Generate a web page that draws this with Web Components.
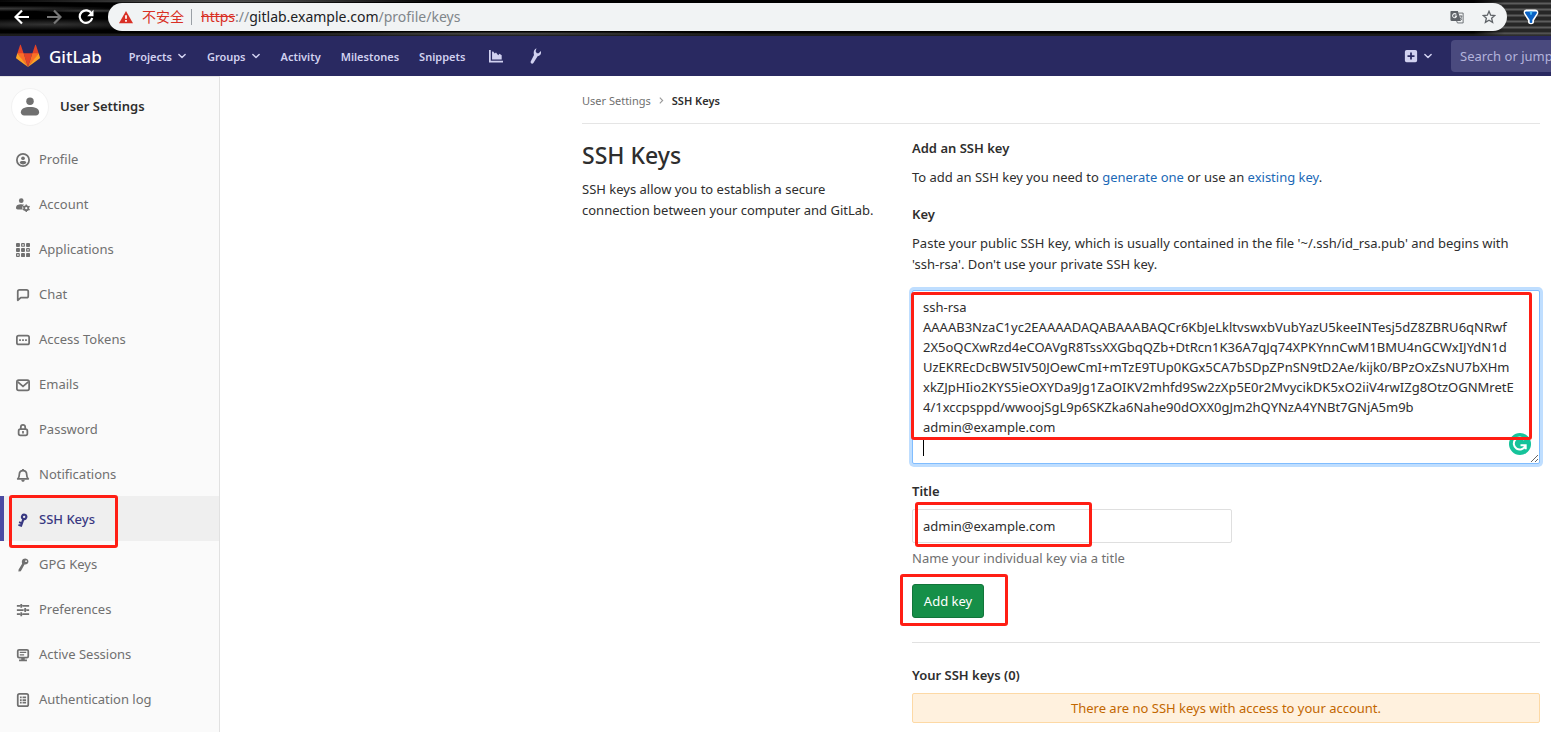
<!DOCTYPE html>
<html lang="en">
<head>
<meta charset="utf-8">
<title>SSH Keys · User Settings · GitLab</title>
<style>
  html, body { margin: 0; min-height: 100%; background: #fff; }
  body { font: 13px/21px "Noto Sans", "Open Sans", "Noto Sans CJK SC", sans-serif; color: #2e2e2e; overflow: hidden; }
</style>
</head>
<body>
<gitlab-page></gitlab-page>

<script>
const define = (name, html) => {
  const template = document.createElement('template');
  template.innerHTML = html;
  customElements.define(name, class extends HTMLElement {
    constructor() {
      super();
      this.attachShadow({ mode: 'open' }).append(template.content.cloneNode(true));
    }
  });
};

/* 16-unit glyphs, painted in the current text colour */
const glyphs = {
  profile: '<circle cx="8" cy="8" r="7" fill="none" stroke="currentColor" stroke-width="2"/><circle cx="8" cy="6" r="2.1"/><path d="M4.2 11.2C4.2 9.4 6 9 8 9s3.800.4 3.800 2.200c-1 1.300-2.300 1.800-3.800 1.800s-2.800-.5-3.800-1.800z"/>',
  account: '<circle cx="6" cy="3" r="2.700"/><path d="M0 11.500C0 8 2.500 7 6 7c1.500 0 2.600.2 3.500.6-2 .8-2.600 2.600-2 5.400H2C.7 13 0 12.500 0 11.500z"/><circle cx="11.700" cy="11.600" r="2.300" fill="none" stroke="currentColor" stroke-width="2"/><path d="M11.700 7.300v8.600M7.800 9.500l7.800 4.200M7.800 13.700l7.800-4.200" stroke="currentColor" stroke-width="1.600"/><circle cx="11.700" cy="11.600" r="1.300" fill="#fafafa"/>',
  applications: '<rect width="4.500" height="4.500" rx="1"/><rect x="6.500" y=".7" width="3" height="3" rx=".4" fill="none" stroke="currentColor" stroke-width="1.400"/><rect x="11.500" width="4.500" height="4.500" rx="1"/><rect y="5.700" width="4.500" height="4.500" rx="1"/><rect x="5.750" y="5.700" width="4.500" height="4.500" rx="1"/><rect x="12.200" y="6.400" width="3" height="3" rx=".4" fill="none" stroke="currentColor" stroke-width="1.400"/><rect x=".7" y="12.200" width="3" height="3" rx=".4" fill="none" stroke="currentColor" stroke-width="1.400"/><rect x="5.750" y="11.500" width="4.500" height="4.500" rx="1"/><rect x="11.500" y="11.500" width="4.500" height="4.500" rx="1"/>',
  chat: '<path d="M2 14V4a2 2 0 0 1 2-2h8a2 2 0 0 1 2 2v5a2 2 0 0 1-2 2H5.500z" fill="none" stroke="currentColor" stroke-width="2" stroke-linejoin="round"/>',
  token: '<rect x="1" y="3" width="14" height="10" rx="2" fill="none" stroke="currentColor" stroke-width="2"/><path d="M3.600 7h2v2h-2zM7 7h2v2H7zM10.400 7h2v2h-2z"/>',
  mail: '<rect x="1" y="2.500" width="14" height="11.500" rx="2" fill="none" stroke="currentColor" stroke-width="2"/><path d="M2 4.500l6 5 6-5" fill="none" stroke="currentColor" stroke-width="2"/>',
  lock: '<rect x="3" y="7" width="10" height="7" rx="2" fill="none" stroke="currentColor" stroke-width="2"/><path d="M5.500 7V4.500a2.500 2.500 0 0 1 5 0V7" fill="none" stroke="currentColor" stroke-width="2"/><path d="M7 9h2v3H7z"/>',
  bell: '<path d="M2 12.500c1.500-1.500 1.800-3 1.800-5C3.800 4.500 5.500 3 8 3s4.200 1.500 4.200 4.500c0 2 .3 3.500 1.800 5z" fill="none" stroke="currentColor" stroke-width="2" stroke-linejoin="round"/><path d="M7 1h2v2H7zM6 13.500h4c0 1.500-.8 2.300-2 2.300s-2-.8-2-2.300z"/>',
  key: '<g transform="rotate(20 8 8)"><circle cx="8" cy="4.200" r="2.500" fill="none" stroke="currentColor" stroke-width="2.400"/><path d="M6.800 7h2.600v9H5v-2h1.800v-1H4.600v-2.200h2.200z"/></g>',
  gpg: '<path d="M8.200 1.200c2.300-1.500 5.800-.2 6 2.500.2 2.400-2 4.200-4.500 3.800L5.500 15l-2.800.5.3-2.500 4-6.300C6.300 4.400 6.800 2.200 8.200 1.200z"/><circle cx="11.500" cy="3.700" r="1" fill="#fafafa"/>',
  sliders: '<path d="M1 3.200h3.500M7.500 3.200H15M1 8h7.500M12 8h3M1 12.800h3.500M7.500 12.800H15" stroke="currentColor" stroke-width="2"/><path d="M5 1h2v4.400H5zM9.500 5.800h2v4.400h-2zM5 10.600h2V15H5z"/><path d="M4 3.200h4M8.500 8h4M4 12.800h4" stroke="currentColor" stroke-width="1.200"/>',
  monitor: '<rect x="2" y="2" width="12" height="9" rx="1.500" fill="none" stroke="currentColor" stroke-width="2"/><path d="M4.300 4.300h7.400v1.500H4.300zM4.300 7.200h5v1.400h-5zM6 11h4v2h2.500v2h-9v-2H6z"/>',
  log: '<rect x="2" y="1" width="12" height="14" rx="2" fill="none" stroke="currentColor" stroke-width="2"/><path d="M4.500 4h2v2h-2zM7.500 4h4v2h-4zM4.500 7h2v2h-2zM7.500 7h4v2h-4zM4.500 10h2v2h-2zM7.500 10h4v2h-4z"/>',
  user: '<circle cx="8" cy="3.400" r="3"/><path d="M.7 12.200C.7 9.300 3.600 8 8 8s7.300 1.300 7.300 4.200c0 1.600-1 2.500-2.600 2.500H3.300C1.700 14.700.7 13.800.7 12.200z"/>',
  down: '<path d="M3 5.500l5 5 5-5" fill="none" stroke="currentColor" stroke-width="2.400" stroke-linecap="round" stroke-linejoin="round"/>',
  right: '<path d="M5 3l5 5-5 5" fill="none" stroke="currentColor" stroke-width="2"/>',
  chart: '<path d="M1 1v13.500h15" fill="none" stroke="currentColor" stroke-width="2"/><path d="M3.500 12V3.500l1-1L6.500 5 8 4l2.500 3L12 5.500 14.500 7v5z"/>',
  wrench: '<path d="M9.500.2L8.600 3.200l1.200 2 1.900.1L13.800 3c.8 2.700-.5 5-3.200 5.300L6.400 15c-1.100 1.500-3.300.3-2.700-1.500L7 7C6.200 3.800 7 1.200 9.500.2z"/>',
  plus: '<path d="M3 1h10a2 2 0 0 1 2 2v10a2 2 0 0 1-2 2H3a2 2 0 0 1-2-2V3a2 2 0 0 1 2-2zm4 3v3H4v2h3v3h2V9h3V7H9V4z" fill-rule="evenodd"/>',
  back: '<path d="M15 8H2M8 1.500L1.500 8 8 14.500" fill="none" stroke="currentColor" stroke-width="2.200"/>',
  forward: '<path d="M1 8h13M8 1.500L14.500 8 8 14.500" fill="none" stroke="currentColor" stroke-width="2.200"/>',
  reload: '<path d="M13.600 4.600A6.300 6.300 0 1 0 14.200 9" fill="none" stroke="currentColor" stroke-width="2.200"/><path d="M15.500.8v6.400H9.200z"/>',
  warning: '<path d="M8 1l8 14H0z"/><path d="M7 6h2v4H7zM7 11.500h2v2H7z" fill="#fff"/>',
  star: '<path d="M8 1.500l1.900 4.400 4.700.4L11 9.400l1.100 4.700L8 11.600l-4.100 2.500L5 9.400 1.400 6.300l4.700-.4z" fill="none" stroke="currentColor" stroke-width="1.500"/>',
  translate: '<path d="M1 1h8l3.500 11.500H2A1.500 1.500 0 0 1 .5 11V2z"/><path d="M9.500 3.500H15v11.300H8.500l-1-2.500" fill="none" stroke="currentColor"/><path d="M7.200 5.200A2.300 2.300 0 1 0 7.500 7H5.400" fill="none" stroke="#f1f3f4" stroke-width="1.200"/><path d="M10.500 7H14M12.500 6v1M13.500 7c-.4 2-1 3-2.300 4M11.500 8.500l2.200 3" fill="none" stroke="currentColor" stroke-width=".9"/>',
  pin: '<path d="M4 .5h8C15 .5 16 3 15 5l-4 6.500V13c0 3-6 3-6 0v-1.500L1 5C0 3 1 .5 4 .5z" fill="#fff"/><path d="M3 2.500h10c1 0 1.200 1 .8 1.800L9.300 11v2c0 1.300-2.600 1.300-2.600 0v-2L2.200 4.300C1.800 3.500 2 2.500 3 2.500z" fill="#0b62c4"/><path d="M6.500 2.500h3L8.500 6h-1z" fill="#45baf5"/>'
};
customElements.define('gl-icon', class extends HTMLElement {
  connectedCallback() {
    if (this.shadowRoot) return;
    this.attachShadow({ mode: 'open' }).innerHTML =
      `<style>:host{display:block;flex:none;width:14px;height:14px}svg{display:block;width:100%;height:100%}</style>
       <svg viewBox="0 0 16 16" fill="currentColor" aria-hidden="true">${glyphs[this.getAttribute('name')]}</svg>`;
  }
});

/* Red highlight drawn over whatever it is placed on */
define('mark-frame', `<style>:host{display:block;position:absolute;box-sizing:border-box;border:3px solid #ff1e14;border-radius:3px;pointer-events:none}</style>`);

define('browser-bar', `
<style>
  :host { display: flex; align-items: center; height: 36px; box-sizing: border-box; padding: 0 12px 2px 14px;
    background:
      linear-gradient(transparent 33px, #3338 34px),
      radial-gradient(ellipse 260px 2px at 32% 94%, #5a5a5a, transparent),
      radial-gradient(ellipse 240px 2px at 14% 3%, #666, transparent),
      radial-gradient(ellipse 120px 3px at 0 24%, #3c3c3c, transparent),
      radial-gradient(ellipse 60px 2px at 6% 30%, #444, transparent),
      radial-gradient(ellipse 140px 6px at 3% 68%, #333, transparent),
      linear-gradient(90deg, #000 95%, transparent 97%),
      repeating-linear-gradient(#262626 0 2px, #5c5c5c 3px 4px, #262626 5px 6px); }
  button { background: none; border: 0; padding: 0; color: #fff; display: block; }
  .nav { display: flex; gap: 16px; }
  .nav gl-icon { width: 16px; height: 16px; }
  .off { color: #777; }
  .box { flex: 1; display: flex; align-items: center; height: 28px; box-sizing: border-box; margin: 0 16px 0 14px; padding: 0 11px;
    border-radius: 14px; background: #f1f3f4; color: #80868b; font-size: 14px; line-height: 20px; white-space: nowrap; }
  .warn { display: flex; align-items: center; gap: 9px; color: #d93025; }
  .sep { width: 1px; height: 16px; background: #9aa0a6; margin: 0 9px 0 7px; }
  .url { flex: 1; } .url s { color: #d93025; } .url b { font-weight: 400; color: #202124; }
  .tools { display: flex; gap: 18px; color: #5f6368; }
  .ext gl-icon { width: 16px; height: 16px; }
</style>
<div class="nav">
  <button aria-label="Back"><gl-icon name="back"></gl-icon></button>
  <button class="off" aria-label="Forward"><gl-icon name="forward"></gl-icon></button>
  <button aria-label="Reload"><gl-icon name="reload"></gl-icon></button>
</div>
<div class="box">
  <span class="warn"><gl-icon name="warning"></gl-icon><span>不安全</span></span>
  <span class="sep"></span>
  <span class="url"><s>https</s>://<b>gitlab.example.com</b>/profile/keys</span>
  <span class="tools"><gl-icon name="translate"></gl-icon><gl-icon name="star"></gl-icon></span>
</div>
<button class="ext" aria-label="Extension"><gl-icon name="pin"></gl-icon></button>`);

define('nav-link', `
<style>:host{display:block}a{display:flex;align-items:center;gap:5px;color:inherit;text-decoration:none}</style>
<a href="#"><slot></slot></a>`);

define('gl-navbar', `
<style>
  :host { display: flex; align-items: center; height: 40px; padding-left: 16px; background: #292961; color: #d1d1f0; font-size: 11px; font-weight: 600; white-space: nowrap; overflow: hidden; }
  .brand { display: flex; align-items: center; gap: 9px; margin-right: 27px; color: #fff; font-size: 17px; font-weight: 500; text-decoration: none; }
  .brand svg { width: 24px; height: 24px; display: block; }
  nav { display: flex; align-items: center; gap: 20px; flex: 1; }
  .small { width: 10px; height: 10px; }
  .chart { margin-left: 4px; }
  .wrench { margin-left: 4px; width: 16px; height: 16px; }
  nav-link.new { margin-right: 18px; }
  input { box-sizing: border-box; width: 100px; height: 32px; border: 0; border-radius: 4px 0 0 4px; padding: 0 0 0 9px; background: #4a4a7e; font: 400 13px/20px "Noto Sans", "Open Sans", sans-serif; }
  input::placeholder { color: #b3b3db; opacity: 1; }
</style>
<a class="brand" href="#"><svg viewBox="0 0 36 36" aria-hidden="true">
  <path fill="#e24329" d="M2 14l9.380 9v-9l-4-12.280c-.205-.632-1.176-.632-1.380 0z"/>
  <path fill="#e24329" d="M34 14l-9.380 9v-9l4-12.280c.205-.632 1.176-.632 1.380 0z"/>
  <path fill="#e24329" d="M18 34.380L11.380 14h13.240z"/>
  <path fill="#fc6d26" d="M18 34.380L11.380 14H2l6 9z"/><path fill="#fc6d26" d="M18 34.380L24.620 14H34l-6 9z"/>
  <path fill="#fca326" d="M2 14L.1 20.160c-.180.565 0 1.200.5 1.560L18 34.380z"/><path fill="#fca326" d="M34 14l1.900 6.160c.180.565 0 1.200-.5 1.560L18 34.380z"/>
</svg><span>GitLab</span></a>
<nav>
  <nav-link>Projects<gl-icon class="small" name="down"></gl-icon></nav-link>
  <nav-link>Groups<gl-icon class="small" name="down"></gl-icon></nav-link>
  <nav-link>Activity</nav-link>
  <nav-link>Milestones</nav-link>
  <nav-link>Snippets</nav-link>
  <nav-link aria-label="Analytics"><gl-icon class="chart" name="chart"></gl-icon></nav-link>
  <nav-link aria-label="Admin"><gl-icon class="wrench" name="wrench"></gl-icon></nav-link>
</nav>
<nav-link class="new" aria-label="New"><gl-icon name="plus"></gl-icon><gl-icon class="small" name="down"></gl-icon></nav-link>
<input type="text" aria-label="Search" placeholder="Search or jump to…">`);

customElements.define('side-item', class extends HTMLElement {
  connectedCallback() {
    if (this.shadowRoot) return;
    this.attachShadow({ mode: 'open' }).innerHTML = `
<style>
  :host { display: block; position: relative; color: #707070; }
  a { display: flex; align-items: center; gap: 9px; height: 45px; box-sizing: border-box; padding: 2px 0 0 16px; color: inherit; text-decoration: none; }
  :host([active]) { color: #393982; background: #efefef; box-shadow: inset 4px 0 #4b4ba3; font-weight: 500; }
</style>
<a href="#"><gl-icon name="${this.getAttribute('icon')}"></gl-icon><span><slot></slot></span></a><slot name="mark"></slot>`;
  }
});

define('gl-sidebar', `
<style>
  :host { display: block; background: #fafafa; border-right: 1px solid #e1e1e1; }
  header { display: flex; align-items: center; gap: 11px; height: 59px; padding-left: 11px; font-weight: 600; }
  .avatar { display: grid; place-items: center; width: 38px; height: 38px; box-sizing: border-box; border: 1px solid #f2f2f2; border-radius: 50%; background: #fff; color: #707070; }
  .avatar gl-icon { width: 20px; height: 20px; }
  mark-frame { left: 9px; top: -1px; width: 109px; height: 53px; z-index: 1; }
</style>
<header><span class="avatar"><gl-icon name="user"></gl-icon></span><span>User Settings</span></header>
<nav>
  <side-item icon="profile">Profile</side-item>
  <side-item icon="account">Account</side-item>
  <side-item icon="applications">Applications</side-item>
  <side-item icon="chat">Chat</side-item>
  <side-item icon="token">Access Tokens</side-item>
  <side-item icon="mail">Emails</side-item>
  <side-item icon="lock">Password</side-item>
  <side-item icon="bell">Notifications</side-item>
  <side-item icon="key" active>SSH Keys<mark-frame slot="mark"></mark-frame></side-item>
  <side-item icon="gpg">GPG Keys</side-item>
  <side-item icon="sliders">Preferences</side-item>
  <side-item icon="monitor">Active Sessions</side-item>
  <side-item icon="log">Authentication log</side-item>
</nav>`);

define('bread-crumbs', `
<style>
  :host { display: flex; align-items: center; gap: 6px; height: 48px; box-sizing: border-box; padding-top: 2px; border-bottom: 1px solid #e5e5e5; font-size: 11px; }
  a { color: #707070; text-decoration: none; } a[aria-current] { color: #2e2e2e; font-weight: 600; }
  gl-icon { width: 9px; height: 9px; color: #999; }
</style>
<a href="#">User Settings</a><gl-icon name="right"></gl-icon><a href="#" aria-current="page">SSH Keys</a>`);

define('key-form', `
<style>
  :host { display: block; }
  h5, p, form { margin: 0; }
  h5, label { display: block; font-size: 13px; line-height: 20px; font-weight: 600; }
  a { color: #1b69b6; text-decoration: none; }
  .intro { margin: 9px 0 16px; }
  .hint { margin: 9px 0 15px; }
  .hint span { white-space: nowrap; }
  .field { position: relative; }
  textarea, input { display: block; box-sizing: border-box; width: 100%; padding: 6px 10px; border: 1px solid #dfdfdf; border-radius: 2px; background: #fff; color: #2e2e2e; font: 13px/20px "Noto Sans", "Open Sans", sans-serif; }
  textarea { height: 174px; overflow: hidden; resize: vertical; white-space: pre; border-color: #80bdff; outline: none; box-shadow: 0 0 0 3px #bfdeff; }
  .caret { position: absolute; left: 11px; bottom: 8px; width: 1px; height: 16px; background: #000; }
  .checker { position: absolute; right: 9px; bottom: 9px; width: 22px; height: 22px; }
  .key mark-frame { left: -1px; right: 8px; top: 2px; bottom: 24px; }
  .title { max-width: 320px; margin: 8px 0 5px; }
  .title-label { margin-top: 17px; }
  .title mark-frame { left: 3px; top: -7px; width: 177px; height: 45px; }
  .help { color: #707070; }
  .submit { width: fit-content; margin-top: 15px; }
  .submit mark-frame { left: -12px; top: -10px; width: 108px; height: 52px; }
  button { display: block; box-sizing: border-box; min-width: 72px; height: 34px; padding: 6px 10px; border: 1px solid #12753a; border-radius: 3px; background: #168f48; color: #fff; font: 13px/20px "Noto Sans", "Open Sans", sans-serif; }
  hr { margin: 24px 0 22px; border: 0; border-top: 1px solid #e1e1e1; }
  .empty { margin-top: 8px; height: 30px; box-sizing: border-box; border: 1px solid #fdd9a5; border-radius: 2px; background: #fff1de; color: #c26700; line-height: 28px; text-align: center; }
</style>
<h5>Add an SSH key</h5>
<p class="intro">To add an SSH key you need to <a href="#">generate one</a> or use an <a href="#">existing key</a>.</p>
<form>
  <label for="key">Key</label>
  <p class="hint">Paste your public SSH key, which is usually contained in the file '~/.ssh/id_rsa.pub' and begins with <span>'ssh-rsa'.</span> Don't use your private SSH key.</p>
  <div class="field key">
    <textarea id="key" spellcheck="false">ssh-rsa
AAAAB3NzaC1yc2EAAAADAQABAAABAQCr6KbJeLkltvswxbVubYazU5keeINTesj5dZ8ZBRU6qNRwf
2X5oQCXwRzd4eCOAVgR8TssXXGbqQZb+DtRcn1K36A7qJq74XPKYnnCwM1BMU4nGCWxIJYdN1d
UzEKREcDcBW5IV50JOewCmI+mTzE9TUp0KGx5CA7bSDpZPnSN9tD2Ae/kijk0/BPzOxZsNU7bXHm
xkZJpHIio2KYS5ieOXYDa9Jg1ZaOIKV2mhfd9Sw2zXp5E0r2MvycikDK5xO2iiV4rwIZg8OtzOGNMretE
4/1xccpsppd/wwoojSgL9p6SKZka6Nahe90dOXX0gJm2hQYNzA4YNBt7GNjA5m9b
admin@example.com
</textarea>
    <span class="caret"></span>
    <svg class="checker" viewBox="0 0 22 22" aria-hidden="true"><circle cx="11" cy="11" r="11" fill="#15c39a"/><path d="M15.500 6.800A6 6 0 1 0 16.300 13M11.500 12.200h5.200v4" fill="none" stroke="#fff" stroke-width="2"/></svg>
    <mark-frame></mark-frame>
  </div>
  <label class="title-label" for="title">Title</label>
  <div class="field title"><input id="title" type="text" value="admin@example.com"><mark-frame></mark-frame></div>
  <p class="help">Name your individual key via a title</p>
  <div class="field submit"><button type="button">Add key</button><mark-frame></mark-frame></div>
</form>
<hr>
<h5>Your SSH keys (0)</h5>
<p class="empty">There are no SSH keys with access to your account.</p>`);

define('gitlab-page', `
<style>
  :host { display: block; }
  .layout { display: grid; grid-template-columns: 220px minmax(0, 1fr); min-height: calc(100vh - 76px); }
  gl-sidebar { border-top: 1px solid #e5e5e5; box-sizing: border-box; }
  main { padding: 0 11px 0 32px; }
  .container { max-width: 958px; margin-left: auto; }
  .row { display: grid; grid-template-columns: 1fr 2fr; margin: 0 -16px; }
  .row > * { padding: 14px 16px 0; }
  h4 { margin: 5px 0 12px; font-size: 23px; line-height: 24px; font-weight: 500; }
  p { margin: 0; }
</style>
<browser-bar></browser-bar>
<gl-navbar></gl-navbar>
<div class="layout">
  <gl-sidebar></gl-sidebar>
  <main><div class="container">
    <bread-crumbs></bread-crumbs>
    <div class="row">
      <section><h4>SSH Keys</h4><p>SSH keys allow you to establish a secure connection between your computer and GitLab.</p></section>
      <key-form></key-form>
    </div>
  </div></main>
</div>`);
</script>
</body>
</html>
